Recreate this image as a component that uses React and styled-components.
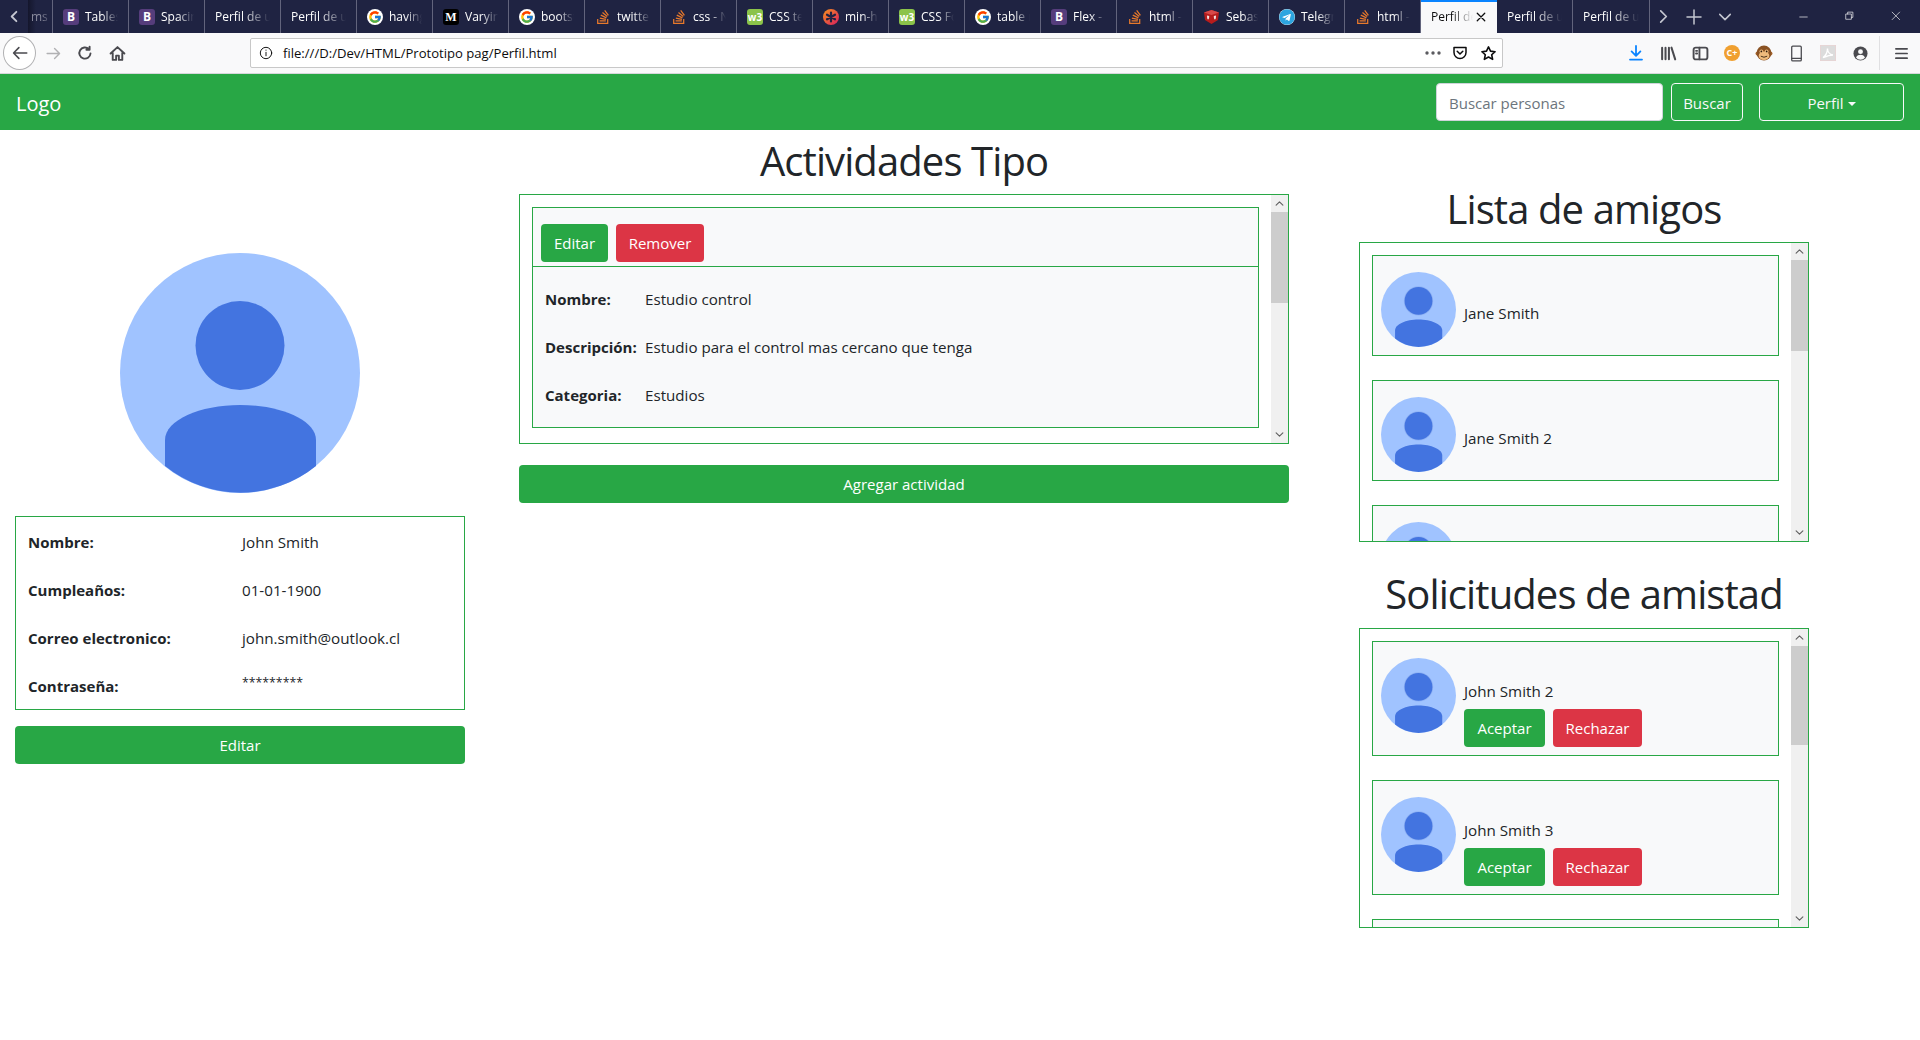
import React from 'react';
import styled, { createGlobalStyle } from 'styled-components';
import { FcGoogle } from 'react-icons/fc';
import { FaStackOverflow, FaTelegram } from 'react-icons/fa';

const FONT = '"Open Sans", "Noto Sans", "Liberation Sans", sans-serif';

const tabs = [
  { icon: 'b', title: 'Tables' },
  { icon: 'b', title: 'Spacing' },
  { title: 'Perfil de usuario' },
  { title: 'Perfil de usuario' },
  { icon: 'g', title: 'having' },
  { icon: 'm', title: 'Varying' },
  { icon: 'g', title: 'bootstrap' },
  { icon: 's', title: 'twitter' },
  { icon: 's', title: 'css - N' },
  { icon: 'w', title: 'CSS text' },
  { icon: 'x', title: 'min-h' },
  { icon: 'w', title: 'CSS Fonts' },
  { icon: 'g', title: 'table r' },
  { icon: 'b', title: 'Flex - B' },
  { icon: 's', title: 'html -' },
  { icon: 'u', title: 'Sebastian' },
  { icon: 't', title: 'Telegram' },
  { icon: 's', title: 'html -' },
];

const friends = ['Jane Smith', 'Jane Smith 2', 'Jane Smith 3'];
const requests = ['John Smith 2', 'John Smith 3', 'John Smith 4'];

const GlobalStyle = createGlobalStyle`
  html, body {
    margin: 0;
    padding: 0;
    background: #fff;
    overflow: hidden;
  }
  body {
    font-family: ${FONT};
    font-size: 16px;
    line-height: 24px;
    color: #212529;
  }
  * {
    box-sizing: border-box;
  }
`;

const Page = styled.div`
  width: 1920px;
  height: 1040px;
  overflow: hidden;
`;

const TabBar = styled.div`
  display: flex;
  align-items: stretch;
  height: 33px;
  background: #1f2342;
  color: #fff;
  font-size: 12px;
  overflow: hidden;
`;

const TabArrow = styled.div`
  flex: none;
  width: ${(props) => props.$width}px;
  display: flex;
  align-items: center;
  justify-content: center;
  color: #c4c6d0;
`;

const Tab = styled.div`
  flex: none;
  width: ${(props) => props.$width || 76}px;
  display: flex;
  align-items: center;
  gap: 6px;
  padding: 0 10px;
  overflow: hidden;
  white-space: nowrap;
  border-right: 1px solid #62647c;
  span {
    flex: 1;
    overflow: hidden;
    -webkit-mask-image: linear-gradient(to right, #000 50%, transparent 100%);
    mask-image: linear-gradient(to right, #000 50%, transparent 100%);
  }
`;

const ClippedTab = styled(Tab)`
  padding: 0 0 0 3px;
  color: #8b8c9e;
  background: linear-gradient(to right, #14162c, #1f2342 8px);
`;

const ActiveTab = styled(Tab)`
  background: #f9f9fa;
  color: #0c0c0d;
  border-right: none;
  border-top: 2px solid #0a84ff;
  padding: 0 10px 2px 10px;
  gap: 2px;
`;

const Favicon = styled.i`
  flex: none;
  width: 16px;
  height: 16px;
  display: flex;
  align-items: center;
  justify-content: center;
  font-style: normal;
  font-weight: 700;
  border-radius: ${(props) => (props.$round ? '50%' : '3px')};
  color: #fff;
  background: ${(props) => props.$bg || 'transparent'};
  font-size: ${(props) => props.$size || 12}px;
  font-family: ${(props) => (props.$serif ? '"Liberation Serif", serif' : FONT)};
`;

const WindowControls = styled.div`
  margin-left: auto;
  display: flex;
  align-items: center;
  color: #e4e4e8;
`;

const WindowButton = styled.div`
  width: 46px;
  display: flex;
  justify-content: center;
`;

const Toolbar = styled.div`
  display: flex;
  align-items: center;
  height: 41px;
  background: #f9f9fa;
  border-bottom: 1px solid #d7d7db;
  color: #4a4a4f;
`;

const NavGroup = styled.div`
  width: 250px;
  flex: none;
  display: flex;
  align-items: center;
  padding-left: 3px;
`;

const BackCircle = styled.div`
  width: 33px;
  height: 34px;
  border-radius: 50%;
  border: 1px solid #b1b1b3;
  background: #fff;
  display: flex;
  align-items: center;
  justify-content: center;
  margin-right: 5px;
`;

const ToolIcon = styled.div`
  width: ${(props) => props.$width || 32}px;
  flex: none;
  display: flex;
  align-items: center;
  justify-content: center;
`;

const UrlBar = styled.div`
  flex: none;
  width: 1253px;
  height: 30px;
  display: flex;
  align-items: center;
  background: #fff;
  border: 1px solid #c8c8c8;
  border-radius: 2px;
  font-size: 13.1px;
  color: #0c0c0d;
  padding-left: 8px;
  gap: 10px;
`;

const UrlActions = styled.div`
  margin-left: auto;
  display: flex;
  align-items: center;
`;

const ToolRight = styled.div`
  flex: 1;
  display: flex;
  align-items: center;
  padding-left: 117px;
`;

const ToolDivider = styled.div`
  width: 1px;
  height: 34px;
  background: #e0e0e2;
  margin: 0 9px 0 3px;
`;

const Navbar = styled.nav`
  height: 56px;
  background: #28a745;
  display: flex;
  align-items: center;
  padding: 0 16px;
`;

const Brand = styled.div`
  color: #fff;
  font-size: 20px;
  line-height: 30px;
  margin-top: 3px;
  margin-right: auto;
`;

const SearchInput = styled.input`
  width: 227px;
  height: 38px;
  padding: 8px 12px 6px;
  border: 1px solid #ced4da;
  border-radius: 4px;
  background: #fff;
  font-family: ${FONT};
  font-size: 15px;
  &::placeholder {
    color: #6c757d;
    opacity: 1;
  }
`;

const OutlineButton = styled.button`
  width: ${(props) => props.$width}px;
  height: 38px;
  margin-left: ${(props) => props.$gap}px;
  background: transparent;
  border: 1px solid #f8f9fa;
  border-radius: 4px;
  color: #f8f9fa;
  font-family: ${FONT};
  font-size: 15px;
  padding: 2px 0 0;
`;

const Caret = styled.span`
  display: inline-block;
  margin-left: 4px;
  vertical-align: 3px;
  border-top: 4px solid #f8f9fa;
  border-left: 4px solid transparent;
  border-right: 4px solid transparent;
`;

const Columns = styled.main`
  display: flex;
  align-items: flex-start;
`;

const LeftColumn = styled.section`
  width: 480px;
  flex: none;
  padding: 123px 15px 0;
`;

const CenterColumn = styled.section`
  width: 800px;
  flex: none;
  margin-left: 24px;
  padding: 7px 15px 0;
`;

const RightColumn = styled.section`
  width: 480px;
  flex: none;
  margin-left: 40px;
  padding: 55px 15px 0;
`;

const Heading = styled.h1`
  margin: ${(props) => props.$top || 0}px 0 ${(props) => props.$gap || 9}px;
  font-size: 40px;
  line-height: 48px;
  font-weight: 400;
  text-align: center;
  letter-spacing: -0.9px;
`;

const BigAvatar = styled.div`
  width: 240px;
  height: 240px;
  margin: 0 auto 23px;
`;

const InfoBox = styled.div`
  border: 1px solid #28a745;
  padding: 0 12px;
`;

const InfoRow = styled.div`
  display: grid;
  grid-template-columns: 214px 1fr;
  height: 48px;
  align-items: center;
  padding-top: 2px;
  font-size: 15px;
  b {
    font-weight: 700;
  }
  span {
    font-size: 15.2px;
  }
`;

const Stars = styled.em`
  font-style: normal;
  font-size: 12.3px;
  position: relative;
  top: -3px;
`;

const BlockButton = styled.div`
  height: 38px;
  margin-top: ${(props) => props.$top}px;
  background: #28a745;
  border-radius: 4px;
  color: #fff;
  font-size: 15px;
  display: flex;
  align-items: center;
  justify-content: center;
`;

const SmallButton = styled.div`
  width: ${(props) => props.$width}px;
  height: 38px;
  flex: none;
  background: ${(props) => (props.$danger ? '#dc3545' : '#28a745')};
  border-radius: 4px;
  color: #fff;
  font-size: 15px;
  display: flex;
  align-items: center;
  justify-content: center;
`;

const ScrollBox = styled.div`
  height: ${(props) => props.$height}px;
  border: 1px solid #28a745;
  display: flex;
  overflow: hidden;
`;

const ScrollContent = styled.div`
  flex: 1;
  min-width: 0;
  padding: 12px;
  overflow: hidden;
`;

const Track = styled.div`
  width: 17px;
  flex: none;
  background: #f0f0f0;
  display: flex;
  flex-direction: column;
  color: #606060;
`;

const TrackArrow = styled.div`
  height: 17px;
  flex: none;
  display: flex;
  align-items: center;
  justify-content: center;
`;

const Thumb = styled.div`
  background: #cdcdcd;
  height: ${(props) => props.$height}px;
`;

const TrackFill = styled.div`
  flex: 1;
`;

const ActivityCard = styled.div`
  border: 1px solid #28a745;
  background: #f8f9fa;
`;

const ActivityHeader = styled.div`
  display: flex;
  gap: 8px;
  height: 59px;
  padding: 16px 8px 0;
  border-bottom: 1px solid #28a745;
`;

const ActivityBody = styled.div`
  padding: 8px 12px 8px;
`;

const ActivityRow = styled.div`
  display: grid;
  grid-template-columns: 100px 1fr;
  height: 48px;
  align-items: center;
  font-size: 15px;
  white-space: nowrap;
  b {
    font-weight: 700;
  }
  span {
    font-size: 15.15px;
  }
`;

const PersonCard = styled.div`
  display: flex;
  gap: 8px;
  border: 1px solid #28a745;
  background: #f8f9fa;
  padding: 16px 8px 8px;
  margin-bottom: 24px;
`;

const SmallAvatar = styled.div`
  width: 75px;
  height: 75px;
  flex: none;
`;

const PersonBody = styled.div`
  padding-top: ${(props) => props.$top}px;
  font-size: 15.2px;
`;

const ButtonRow = styled.div`
  display: flex;
  gap: 8px;
  margin-top: 6px;
`;

const Avatar = ({ ringed }) => (
  <svg width="100%" height="100%" viewBox="0 0 240 240">
    <circle cx="120" cy="120" r="120" fill="#a0c3ff" />
    {ringed && <circle cx="120" cy="92.500" r="47" fill="#8fb2f4" />}
    <circle cx="120" cy="92.500" r="44.500" fill="#4374e0" />
    <path d="M45 213 V187 C45 167 80 152 120 152 C160 152 196 167 196 187 V213 A120 120 0 0 1 45 213 Z" fill="#4374e0" />
  </svg>
);

const PetalIcon = () => (
  <svg width="16" height="16" viewBox="0 0 16 16">
    <defs>
      <linearGradient id="petal" x1="0" y1="0" x2="1" y2="1">
        <stop offset="0" stopColor="#f7941d" />
        <stop offset="1" stopColor="#d81b60" />
      </linearGradient>
    </defs>
    <circle cx="8" cy="8" r="8" fill="url(#petal)" />
    <path d="M8 3.500v9M4 5.700l8 4.600M4 10.300l8-4.600" stroke="#1f2342" strokeWidth="2.200" strokeLinecap="round" />
  </svg>
);

const ShieldIcon = () => (
  <svg width="17" height="16" viewBox="0 0 17 16">
    <path d="M1 3.500 8.500 1 16 3.500 15 11l-6.500 4L2 11z" fill="#b71c1c" />
    <path d="M1 3.500 8.500 6 16 3.500 8.500 1z" fill="#d84a4a" />
    <path d="M4 6.500c0 3 .5 4 1.100 4s1.100-1 1.100-3.500zM10.800 7c0 2.500.5 3.500 1.100 3.500s1.100-1 1.100-4z" fill="#f3e0e0" />
  </svg>
);

const TabIcon = ({ type }) => {
  if (type === 'b') return <Favicon $bg="#563d7c">B</Favicon>;
  if (type === 'g') return <Favicon $bg="#fff" $round><FcGoogle size={14} /></Favicon>;
  if (type === 'm') return <Favicon $bg="#000" $serif>M</Favicon>;
  if (type === 's') return <Favicon><FaStackOverflow size={16} color="#e8792b" /></Favicon>;
  if (type === 'w') return <Favicon $bg="#8bc34a" $size={10}>w3</Favicon>;
  if (type === 'x') return <PetalIcon />;
  if (type === 'u') return <ShieldIcon />;
  if (type === 't') return <Favicon $bg="#fff" $round><FaTelegram size={16} color="#2ca5e0" /></Favicon>;
  return null;
};

const Stroke = ({ size = 16, children, width = 1.6, color = 'currentColor' }) => (
  <svg width={size} height={size} viewBox="0 0 16 16" fill="none" stroke={color} strokeWidth={width} strokeLinecap="round" strokeLinejoin="round">
    {children}
  </svg>
);

const MonkeyIcon = () => (
  <svg width="18" height="18" viewBox="0 0 17 17">
    <circle cx="2.500" cy="9" r="2" fill="#a9672e" />
    <circle cx="14.500" cy="9" r="2" fill="#a9672e" />
    <circle cx="8.500" cy="8.500" r="7" fill="#8a5223" />
    <ellipse cx="8.500" cy="11" rx="5" ry="4" fill="#eebb7c" />
    <circle cx="6" cy="7" r="1.800" fill="#eebb7c" />
    <circle cx="11" cy="7" r="1.800" fill="#eebb7c" />
    <circle cx="6" cy="7" r=".8" fill="#2b1a0a" />
    <circle cx="11" cy="7" r=".8" fill="#2b1a0a" />
    <path d="M5.500 11.500q3 2 6 0" stroke="#2b1a0a" strokeWidth=".8" fill="none" />
  </svg>
);

const Scrollbar = ({ thumb }) => (
  <Track>
    <TrackArrow><Stroke size={9} width={2}><path d="M2 11l6-6 6 6" /></Stroke></TrackArrow>
    <Thumb $height={thumb} />
    <TrackFill />
    <TrackArrow><Stroke size={9} width={2}><path d="M2 5l6 6 6-6" /></Stroke></TrackArrow>
  </Track>
);

const BrowserChrome = () => (
  <>
    <TabBar>
      <TabArrow $width={28}>
        <Stroke size={15} width={2}><path d="M10 3l-5 5 5 5" /></Stroke>
      </TabArrow>
      <ClippedTab $width={25}><span>ms</span></ClippedTab>
      {tabs.map((tab, i) => (
        <Tab key={i}>
          {tab.icon && <TabIcon type={tab.icon} />}
          <span>{tab.title}</span>
        </Tab>
      ))}
      <ActiveTab $width={76}>
        <span>Perfil de usuario</span>
        <Stroke size={12} width={1.7}><path d="M3 3l10 10M13 3L3 13" /></Stroke>
      </ActiveTab>
      <Tab><span>Perfil de usuario</span></Tab>
      <Tab $width={77}><span>Perfil de usuario</span></Tab>
      <TabArrow $width={27}>
        <Stroke size={15} width={1.800}><path d="M5 2l6 6-6 6" /></Stroke>
      </TabArrow>
      <TabArrow $width={33}>
        <Stroke size={16} width={1.500}><path d="M8 1v14M1 8h14" /></Stroke>
      </TabArrow>
      <TabArrow $width={30}>
        <Stroke size={14} width={1.800}><path d="M2 5l6 6 6-6" /></Stroke>
      </TabArrow>
      <WindowControls>
        <WindowButton><Stroke size={12} width={1}><path d="M1 8h10" /></Stroke></WindowButton>
        <WindowButton>
          <Stroke size={12} width={1}><path d="M1.500 4h7v7h-7zM3.500 4V1.500h7v7H8.500" /></Stroke>
        </WindowButton>
        <WindowButton><Stroke size={12} width={1}><path d="M1.500 1.500l10 10M11.500 1.500l-10 10" /></Stroke></WindowButton>
      </WindowControls>
    </TabBar>
    <Toolbar>
      <NavGroup>
        <BackCircle>
          <Stroke size={18} width={1.400}><path d="M14 8H2.500M7 3.200 2.300 8 7 12.800" /></Stroke>
        </BackCircle>
        <ToolIcon $width={24}>
          <Stroke size={17} width={1.300} color="#b1b1b3"><path d="M2 8h11.500M9 3.200 13.700 8 9 12.800" /></Stroke>
        </ToolIcon>
        <ToolIcon $width={40}>
          <Stroke size={16} width={1.900}><path d="M13.500 8.500A5.600 5.600 0 1 1 11.800 4M12.600 1.600v3.200H9.400" /></Stroke>
        </ToolIcon>
        <ToolIcon $width={24}>
          <Stroke size={17} width={1.800}><path d="M1.500 8 8 2l6.500 6M3.500 7v7h3.200v-4h2.600v4h3.200V7" /></Stroke>
        </ToolIcon>
      </NavGroup>
      <UrlBar>
        <Stroke size={14} width={1.100}><circle cx="8" cy="8" r="6.500" /><path d="M8 7.200v4M8 4.600v.3" /></Stroke>
        file:///D:/Dev/HTML/Prototipo pag/Perfil.html
        <UrlActions>
          <ToolIcon $width={26}>
            <svg width="16" height="4" viewBox="0 0 16 4" fill="#5a5a5f"><circle cx="2" cy="2" r="1.700" /><circle cx="8" cy="2" r="1.700" /><circle cx="14" cy="2" r="1.700" /></svg>
          </ToolIcon>
          <ToolIcon $width={28}>
            <Stroke size={16} width={1.500}><path d="M2 2.500h12v5a6 6 0 0 1-12 0zM5.200 6.200 8 9l2.800-2.800" /></Stroke>
          </ToolIcon>
          <ToolIcon $width={28}>
            <Stroke size={17} width={1.500}><path d="M8 1.800l1.900 4 4.300.5-3.200 2.900.9 4.300L8 11.300l-3.900 2.200.9-4.300-3.200-2.900 4.300-.5z" /></Stroke>
          </ToolIcon>
        </UrlActions>
      </UrlBar>
      <ToolRight>
        <ToolIcon>
          <Stroke size={16} width={1.800} color="#0a84ff"><path d="M8 1v9.500M3.600 6.400 8 10.800l4.400-4.400M2 14.600h12" /></Stroke>
        </ToolIcon>
        <ToolIcon>
          <Stroke size={17} width={1.900}><path d="M2 2.500v11M5.200 2.500v11M8.400 2.500v11M10.800 2.500l3.500 11" /></Stroke>
        </ToolIcon>
        <ToolIcon>
          <Stroke size={17} width={1.800}><rect x="1.500" y="2.500" width="13" height="11" rx="2" /><path d="M7 2.500v11M3.800 5.500h1M3.800 8h1" /></Stroke>
        </ToolIcon>
        <ToolIcon>
          <Favicon $bg="#f0a030" $size={9} $round>C+</Favicon>
        </ToolIcon>
        <ToolIcon><MonkeyIcon /></ToolIcon>
        <ToolIcon>
          <Stroke size={17} width={1.200}><rect x="3.500" y="1" width="9" height="14" rx="1" /><path d="M3.500 12.500h9" /></Stroke>
        </ToolIcon>
        <ToolIcon>
          <svg width="16" height="16" viewBox="0 0 16 16"><rect width="16" height="16" fill="#dcdcdc" stroke="#efcfcf" /><path d="M3 12.500c3-2 4.500-6 4.500-9 0 3 2 6 5.500 6.500-3 0-6 1-10 2.500z" fill="none" stroke="#fff" strokeWidth="1.400" /></svg>
        </ToolIcon>
        <ToolIcon>
          <svg width="15" height="15" viewBox="0 0 16 16"><circle cx="8" cy="8" r="7.500" fill="#4a4a4f" /><circle cx="8" cy="6" r="2.600" fill="#f9f9fa" /><path d="M3.200 12.200c1-2 3-2.800 4.800-2.800s3.800.8 4.800 2.800a6 6 0 0 1-9.600 0z" fill="#f9f9fa" /></svg>
        </ToolIcon>
        <ToolDivider />
        <ToolIcon $width={24}>
          <Stroke size={15} width={1.800}><path d="M2 3h12M2 8h12M2 13h12" /></Stroke>
        </ToolIcon>
      </ToolRight>
    </Toolbar>
  </>
);

const App = () => (
  <Page>
    <GlobalStyle />
    <BrowserChrome />
    <Navbar>
      <Brand>Logo</Brand>
      <SearchInput placeholder="Buscar personas" />
      <OutlineButton $width={72} $gap={8}>Buscar</OutlineButton>
      <OutlineButton $width={145} $gap={16}>Perfil<Caret /></OutlineButton>
    </Navbar>
    <Columns>
      <LeftColumn>
        <BigAvatar><Avatar /></BigAvatar>
        <InfoBox>
          <InfoRow><b>Nombre:</b><span>John Smith</span></InfoRow>
          <InfoRow><b>Cumpleaños:</b><span>01-01-1900</span></InfoRow>
          <InfoRow><b>Correo electronico:</b><span>john.smith@outlook.cl</span></InfoRow>
          <InfoRow><b>Contraseña:</b><Stars>*********</Stars></InfoRow>
        </InfoBox>
        <BlockButton $top={16}>Editar</BlockButton>
      </LeftColumn>
      <CenterColumn>
        <Heading>Actividades Tipo</Heading>
        <ScrollBox $height={250}>
          <ScrollContent>
            <ActivityCard>
              <ActivityHeader>
                <SmallButton $width={67}>Editar</SmallButton>
                <SmallButton $width={88} $danger>Remover</SmallButton>
              </ActivityHeader>
              <ActivityBody>
                <ActivityRow><b>Nombre:</b><span>Estudio control</span></ActivityRow>
                <ActivityRow><b>Descripción:</b><span>Estudio para el control mas cercano que tenga</span></ActivityRow>
                <ActivityRow><b>Categoria:</b><span>Estudios</span></ActivityRow>
              </ActivityBody>
            </ActivityCard>
          </ScrollContent>
          <Scrollbar thumb={91} />
        </ScrollBox>
        <BlockButton $top={21}>Agregar actividad</BlockButton>
      </CenterColumn>
      <RightColumn>
        <Heading>Lista de amigos</Heading>
        <ScrollBox $height={300}>
          <ScrollContent>
            {friends.map((name) => (
              <PersonCard key={name}>
                <SmallAvatar><Avatar ringed /></SmallAvatar>
                <PersonBody $top={29}>{name}</PersonBody>
              </PersonCard>
            ))}
          </ScrollContent>
          <Scrollbar thumb={91} />
        </ScrollBox>
        <Heading $top={28} $gap={10}>Solicitudes de amistad</Heading>
        <ScrollBox $height={300}>
          <ScrollContent>
            {requests.map((name) => (
              <PersonCard key={name}>
                <SmallAvatar><Avatar ringed /></SmallAvatar>
                <PersonBody $top={21}>
                  {name}
                  <ButtonRow>
                    <SmallButton $width={81}>Aceptar</SmallButton>
                    <SmallButton $width={89} $danger>Rechazar</SmallButton>
                  </ButtonRow>
                </PersonBody>
              </PersonCard>
            ))}
          </ScrollContent>
          <Scrollbar thumb={99} />
        </ScrollBox>
      </RightColumn>
    </Columns>
  </Page>
);

export default App;
